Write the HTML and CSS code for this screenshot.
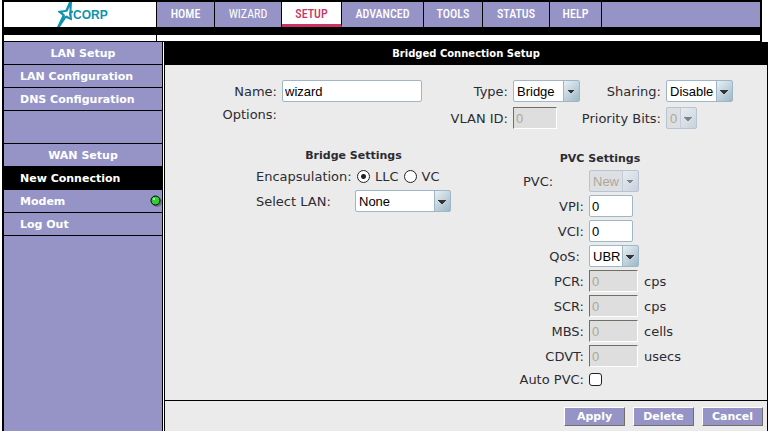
FILE: index.html
```html
<!DOCTYPE html>
<html lang="en">
<head>
    <meta charset="UTF-8">
    <meta name="viewport" content="width=device-width, initial-scale=1.0">
    <title>Bridged Connection Setup</title>
    <link rel="stylesheet" href="styles.css">
</head>
<body>
    <header class="header">
        <div class="topbar">
            <a class="logo" href="#">
                <svg width="16" height="25" viewBox="0 0 16 25">
                    <path fill="#0f93ae" fill-rule="evenodd" d="M15 0 L14.500 8.500 L16 9 L16 10.500 L14.500 11 L15 18.500 L9 16 L3 25 L0 25 L4 16.500 L5.500 13.500 L1 10 L1 9 L8.500 8 L12 0 Z M12.500 5 L10.500 9.500 L5.500 10.500 L8 13 L7.500 14.500 L10 13.500 L12.500 15.500 L12 11 L12.500 9 Z"/>
                </svg>
                <span>CORP</span>
            </a>
            <nav class="tabs">
                <a href="#">HOME</a>
                <a class="light" href="#">WIZARD</a>
                <a class="active" href="#">SETUP</a>
                <a href="#">ADVANCED</a>
                <a href="#">TOOLS</a>
                <a href="#">STATUS</a>
                <a href="#">HELP</a>
            </nav>
        </div>
        <div class="strip"><span></span><span></span></div>
    </header>

    <div class="page">
        <nav class="sidebar">
            <h2>LAN Setup</h2>
            <a href="#">LAN Configuration</a>
            <a href="#">DNS Configuration</a>
            <div class="spacer"></div>
            <h2>WAN Setup</h2>
            <a class="active" href="#">New Connection</a>
            <a href="#">Modem
                <svg class="led" width="12" height="12" viewBox="0 0 12 12">
                    <circle cx="7" cy="7" r="5" fill="#6d6d86"/>
                    <circle cx="5.500" cy="5.500" r="4.500" fill="#2fd02f" stroke="#000"/>
                    <circle cx="4" cy="4" r="1" fill="#d6ffd6"/>
                </svg>
            </a>
            <a href="#">Log Out</a>
        </nav>

        <form class="main">
            <h1>Bridged Connection Setup</h1>

            <div class="content">
                <div class="general">
                    <label for="name">Name:</label>
                    <input type="text" id="name" value="wizard">
                    <label for="type">Type:</label>
                    <select id="type"><option>Bridge</option></select>
                    <label for="sharing">Sharing:</label>
                    <select id="sharing"><option>Disable</option></select>

                    <span class="options">Options:</span>
                    <span></span>
                    <label for="vlan">VLAN ID:</label>
                    <input type="text" class="small" id="vlan" value="0" disabled>
                    <label for="priority">Priority Bits:</label>
                    <select id="priority" disabled><option>0</option></select>
                </div>

                <div class="settings">
                    <section class="bridge">
                        <h3>Bridge Settings</h3>
                        <div class="encapsulation">
                            <span>Encapsulation:</span>
                            <input type="radio" name="encap" id="llc" checked>
                            <label for="llc">LLC</label>
                            <input type="radio" name="encap" id="vc">
                            <label for="vc">VC</label>
                        </div>
                        <div class="lan">
                            <label for="lan">Select LAN:</label>
                            <select id="lan"><option>None</option></select>
                        </div>
                    </section>

                    <section class="pvc">
                        <h3>PVC Settings</h3>
                        <div class="row">
                            <label class="left" for="pvc">PVC:</label>
                            <select id="pvc" disabled><option>New</option></select>
                        </div>
                        <div class="row">
                            <label for="vpi">VPI:</label>
                            <input type="text" class="small" id="vpi" value="0">
                        </div>
                        <div class="row">
                            <label for="vci">VCI:</label>
                            <input type="text" class="small" id="vci" value="0">
                        </div>
                        <div class="row">
                            <label class="qos" for="qos">QoS:</label>
                            <select id="qos"><option>UBR</option></select>
                        </div>
                        <div class="row">
                            <label for="pcr">PCR:</label>
                            <input type="text" id="pcr" value="0" disabled>
                            <span>cps</span>
                        </div>
                        <div class="row">
                            <label for="scr">SCR:</label>
                            <input type="text" id="scr" value="0" disabled>
                            <span>cps</span>
                        </div>
                        <div class="row">
                            <label for="mbs">MBS:</label>
                            <input type="text" id="mbs" value="0" disabled>
                            <span>cells</span>
                        </div>
                        <div class="row">
                            <label for="cdvt">CDVT:</label>
                            <input type="text" id="cdvt" value="0" disabled>
                            <span>usecs</span>
                        </div>
                        <div class="row last">
                            <label for="auto">Auto PVC:</label>
                            <input type="checkbox" id="auto">
                        </div>
                    </section>
                </div>
            </div>

            <div class="buttons">
                <button type="button">Apply</button>
                <button type="button">Delete</button>
                <button type="button">Cancel</button>
            </div>
        </form>
    </div>
</body>
</html>
```
FILE: styles.css
```css
* {
    box-sizing: border-box;
}

body {
    margin: 0;
    padding-left: 2px;
    min-height: 100vh;
    display: flex;
    flex-direction: column;
    background-color: white;
    color: #2b2b33;
    font-family: Verdana, "DejaVu Sans", sans-serif;
    font-size: 13px;
}

a {
    color: white;
    text-decoration: none;
}

h1, h2, h3 {
    margin: 0;
    font-size: 11px;
    text-align: center;
}

/* top bar */
.header {
    margin-right: 6px;
    padding: 2px 2px 1px;
    background-color: black;
}

.topbar {
    display: flex;
    height: 25px;
    margin-bottom: 8px;
}

.logo {
    display: flex;
    width: 152px;
    padding-left: 53px;
    background-color: white;
    color: #0f93ae;
    font-family: "Liberation Sans", Arial, sans-serif;
    font-size: 12px;
    font-weight: bold;
    line-height: 26px;
}

.tabs {
    flex: 1;
    display: grid;
    grid-template-columns: 58px 67px 60px 82px 59px 67px 52px;
    grid-template-rows: 25px;
    margin-left: 1px;
    background-color: #9694c7;
}

.tabs a {
    border-right: 1px solid black;
    font-family: "Roboto Condensed", Roboto, sans-serif;
    font-size: 12px;
    font-weight: 500;
    line-height: 25px;
    text-align: center;
}

.tabs .light {
    font-weight: 400;
}

.tabs .active {
    background-color: white;
    border-bottom: 3px solid #cc3366;
    color: #cc3366;
}

.strip {
    display: flex;
    gap: 1px;
    height: 6px;
}

.strip span {
    width: 152px;
    background-color: white;
}

.strip span:last-child {
    flex: 1;
}

/* page */
.page {
    flex: 1;
    display: flex;
}

.sidebar {
    width: 161px;
    margin-right: 1px;
    border-left: 2px solid black;
    border-right: 1px solid black;
    background-color: #9694c7;
    color: white;
    font-weight: bold;
}

.sidebar h2,
.sidebar a {
    display: flex;
    align-items: center;
    height: 23px;
    border-bottom: 1px solid black;
    font-size: 11px;
}

.sidebar h2 {
    justify-content: center;
}

.sidebar a {
    justify-content: space-between;
    padding: 0 0 0 16px;
}

.sidebar .active {
    background-color: black;
}

.spacer {
    height: 33px;
    border-bottom: 1px solid black;
}

.main {
    flex: 1;
    display: flex;
    flex-direction: column;
    border-left: 1px solid black;
    border-right: 1px solid black;
    background-color: #ebebeb;
}

.main h1 {
    background-color: black;
    color: white;
    font-size: 10px;
    line-height: 23px;
}

.content {
    flex: 1;
    padding-top: 15px;
}

.general {
    display: grid;
    grid-template-columns: 112px 1fr 60px 66px 77px 101px;
    gap: 5px;
    align-items: center;
    justify-items: start;
    white-space: nowrap;
}

.general label,
.general .options {
    justify-self: end;
}

.general .options {
    align-self: start;
}

#name {
    width: 140px;
}

#type, #sharing {
    width: 67px;
}

#priority {
    width: 31px;
}

.settings {
    display: grid;
    grid-template-columns: 358px 1fr;
}

.bridge {
    width: 195px;
    margin: 19px 0 0 91px;
}

.bridge h3 {
    line-height: 16px;
}

.encapsulation {
    display: flex;
    align-items: center;
    gap: 5px;
    height: 24px;
}

.encapsulation span {
    width: 96px;
}

.lan {
    display: flex;
    align-items: center;
    justify-content: space-between;
    margin-top: 2px;
}

#lan {
    width: 96px;
}

.pvc {
    width: 154px;
    margin-top: 21px;
}

.pvc h3 {
    line-height: 18px;
    margin-bottom: 2px;
}

.row {
    display: grid;
    grid-template-columns: 61px 50px 1fr;
    column-gap: 5px;
    align-items: center;
    height: 22px;
    margin-bottom: 3px;
}

.row label {
    justify-self: end;
    white-space: nowrap;
}

.row .left {
    justify-self: start;
}

.row .qos {
    padding-right: 4px;
}

.row.last {
    height: 18px;
}

/* form controls */
input, select {
    margin: 0;
    color: black;
    font-family: "Liberation Sans", Arial, sans-serif;
    font-size: 13px;
}

input[type="text"] {
    width: 49px;
    height: 22px;
    padding: 0 2px;
    border: 1px solid #9fb6c6;
    border-radius: 2px;
    background-color: white;
}

input[type="text"].small {
    width: 44px;
}

input[type="text"]:disabled {
    border: 1px solid;
    border-color: #716f64 white white #716f64;
    border-radius: 0;
    background-color: #dedede;
    color: #aca899;
}

select {
    appearance: none;
    height: 22px;
    padding: 0 16px 0 3px;
    border: 1px solid #9fb6c6;
    border-radius: 2px;
    background-color: white;
    background-image:
        linear-gradient(to top right, transparent 50%, #333 50%),
        linear-gradient(to top left, transparent 50%, #333 50%),
        linear-gradient(#9fb6c6, #9fb6c6),
        linear-gradient(135deg, #e8f0f5, #9db7c6);
    background-position: right 8px top 9px, right 4px top 9px, right 15px top, right top;
    background-size: 4px 4px, 4px 4px, 1px 100%, 15px 100%;
    background-repeat: no-repeat;
}

select:disabled {
    border-color: #b8c4d2;
    background-color: #dedfe3;
    background-image:
        linear-gradient(to top right, transparent 50%, #7e868c 50%),
        linear-gradient(to top left, transparent 50%, #7e868c 50%),
        linear-gradient(#c3cdd8, #c3cdd8),
        linear-gradient(135deg, #e8ecf1, #c8d2dc);
    color: #aca899;
    opacity: 1;
}

input[type="radio"],
input[type="checkbox"] {
    appearance: none;
    width: 13px;
    height: 13px;
    border: 1px solid #222;
    background-color: white;
}

input[type="radio"] {
    border-radius: 50%;
}

input[type="radio"]:checked {
    background-image: radial-gradient(circle, #222 2px, transparent 3px);
}

input[type="checkbox"] {
    border-radius: 3px;
}

/* bottom buttons */
.buttons {
    display: flex;
    justify-content: flex-end;
    gap: 8px;
    height: 31px;
    padding: 6px 4px 0 0;
    border-top: 1px solid black;
}

.buttons button {
    width: 61px;
    height: 19px;
    padding: 0;
    border: 1px solid;
    border-color: white #716f64 #716f64 white;
    background-color: #9694c7;
    color: white;
    font-family: Verdana, "DejaVu Sans", sans-serif;
    font-size: 11px;
    font-weight: bold;
}
```
